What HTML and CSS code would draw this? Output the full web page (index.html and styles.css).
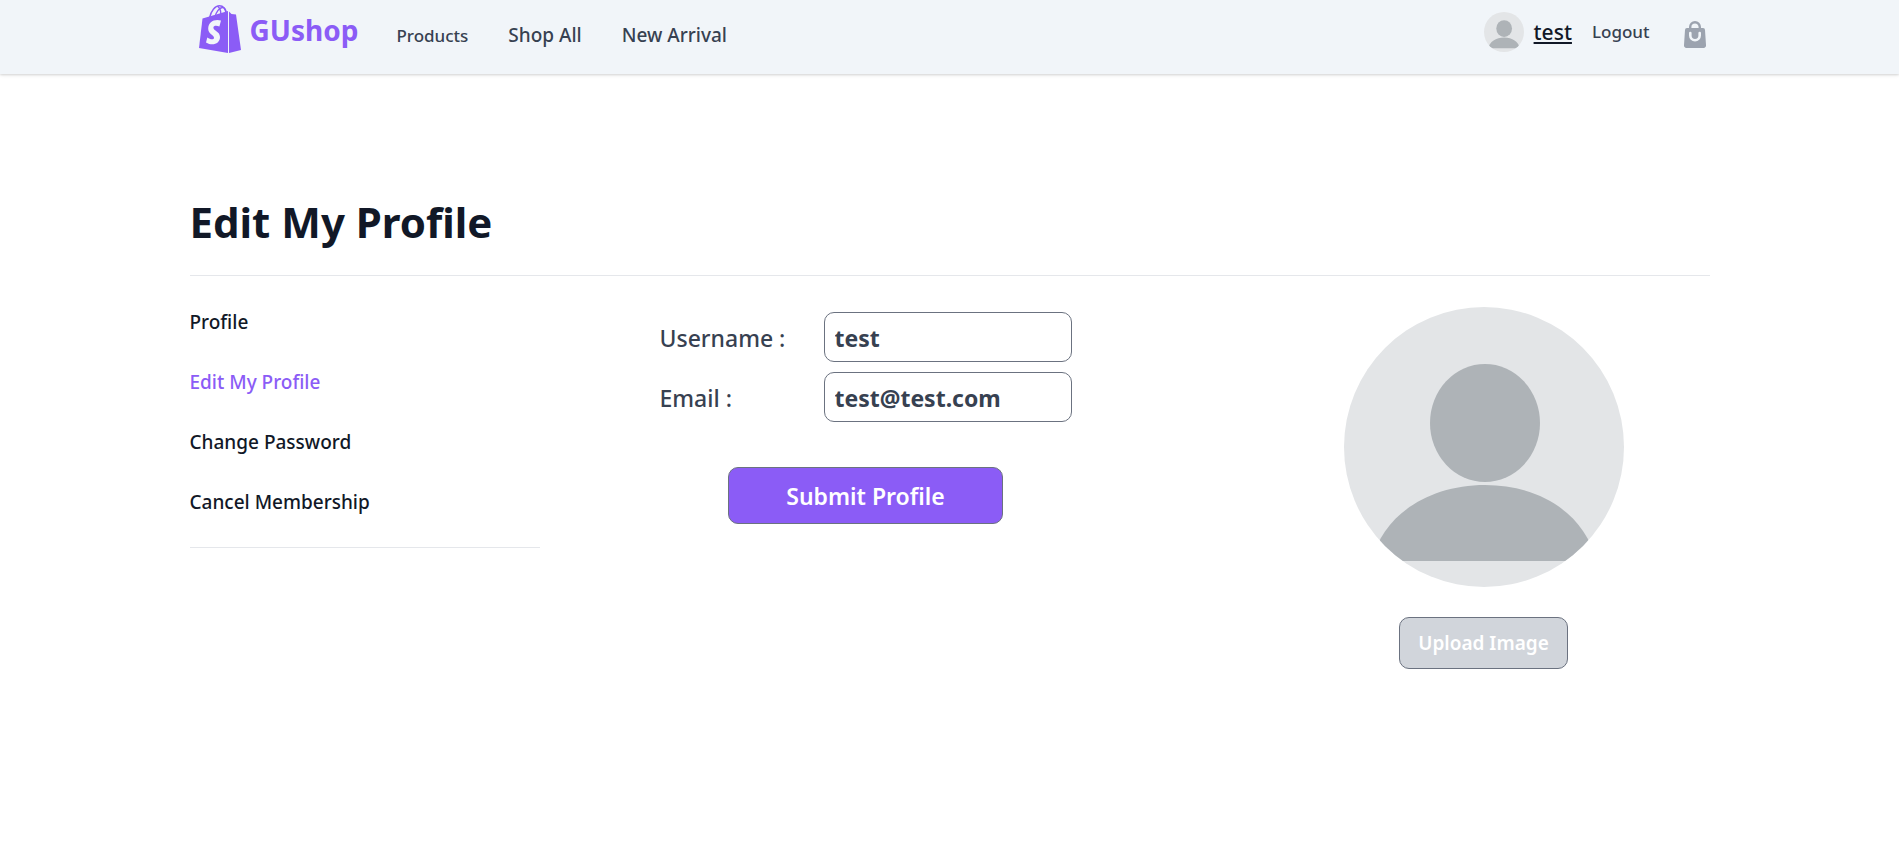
FILE: index.html
```html
<!DOCTYPE html>
<html lang="en">
<head>
<meta charset="utf-8">
<meta name="viewport" content="width=device-width, initial-scale=1">
<title>GUshop - Edit My Profile</title>
<link rel="stylesheet" href="styles.css">
</head>
<body>
<svg class="defs" aria-hidden="true">
  <symbol id="person" viewBox="0 0 280 280">
    <rect width="280" height="280" fill="#e3e5e7"/>
    <ellipse cx="141" cy="116" rx="55" ry="59" fill="#aeb3b7"/>
    <path d="M28 254C38 209 84 178 141 178s101 31 111 76z" fill="#aeb3b7"/>
  </symbol>
</svg>
<header class="site-header">
  <div class="container bar">
    <a class="brand" href="#">
      <svg class="brand-icon" viewBox="0 0 42 48" aria-hidden="true">
        <g fill="none" stroke="#8b5cf6" stroke-width="1.4">
          <path d="M10.500 13C12 6 16 .8 20.500 .8c4 0 6 3.200 6.500 8"/>
          <path d="M16 12C17 7 20.500 2.500 23.500 2.500c2 0 3.500 2 4 6"/>
          <path d="M21.800 10c.2-4-.5-6.500-2.800-8.500"/>
        </g>
        <path fill="#8b5cf6" d="M3.500 13.500 29 6v42L0 43z"/>
        <path fill="#8b5cf6" d="M30 6.500l2.500 2.500 4.500 .5L42 45l-12 3z"/>
        <path fill="#f1f5f9" d="M22 15.500l-1.600 6c-3-1.300-6-.9-6 1.200 0 3 6.600 3.600 6.600 9.300 0 6.800-7.500 9.500-14 5.500l1.300-5c3 2.300 6.700 2.500 6.700 .2 0-2.900-5.800-3.400-5.800-9C9.200 17 15.500 13.500 22 15.500z"/>
      </svg>
      <span>GUshop</span>
    </a>
    <nav class="main-nav" aria-label="Main">
      <a class="nav-small" href="#">Products</a>
      <a href="#">Shop All</a>
      <a href="#">New Arrival</a>
    </nav>
    <div class="account">
      <svg class="avatar-small" role="img" aria-label="Avatar"><use href="#person"/></svg>
      <a class="user" href="#">test</a>
      <a class="logout" href="#">Logout</a>
      <a class="bag" href="#" aria-label="Shopping bag">
        <svg viewBox="0 0 22 27" aria-hidden="true">
          <path fill="none" stroke="#9ca3af" stroke-width="2.400" d="M6.200 9V6a4.800 4.800 0 0 1 9.600 0v3"/>
          <path fill="#9ca3af" d="M3 7h16a2 2 0 0 1 2 2l1 15a2.500 2.500 0 0 1-2.500 3h-17A2.500 2.500 0 0 1 0 24L1 9a2 2 0 0 1 2-2z"/>
          <path fill="none" stroke="#f1f5f9" stroke-width="2.600" stroke-linecap="round" d="M6.300 12v2.500a4.700 4.700 0 0 0 9.400 0V12"/>
        </svg>
      </a>
    </div>
  </div>
</header>
<main class="container page">
  <h1>Edit My Profile</h1>
  <div class="columns">
    <nav class="side-nav" aria-label="Account">
      <a href="#">Profile</a>
      <a class="current" href="#" aria-current="page">Edit My Profile</a>
      <a href="#">Change Password</a>
      <a href="#">Cancel Membership</a>
    </nav>
    <form class="profile-form">
      <div class="fields">
        <label for="username">Username :</label>
        <input id="username" type="text" value="test">
        <label for="email">Email :</label>
        <input id="email" type="email" value="test@test.com">
      </div>
      <button class="submit" type="button">Submit Profile</button>
    </form>
    <section class="picture" aria-label="Profile image">
      <svg class="avatar-large" role="img" aria-label="Profile picture"><use href="#person"/></svg>
      <button class="upload" type="button">Upload Image</button>
    </section>
  </div>
</main>
</body>
</html>
```
FILE: styles.css
```css
*, *::before, *::after { box-sizing: border-box; }
body {
  margin: 0;
  background: #fff;
  color: #111827;
  font: 500 19px/30px "Segoe UI", "Noto Sans", "Open Sans", sans-serif;
}
a { color: inherit; text-decoration: none; }
h1 { margin: 0; }
svg { display: block; }
input, button { font: inherit; }
.defs { position: absolute; width: 0; height: 0; }
.container { max-width: 1600px; margin: 0 auto; padding: 0 40px; }

.site-header {
  background: #f1f5f9;
  box-shadow: 0 1px 4px rgba(0, 0, 0, .1), 0 1px 2px rgba(0, 0, 0, .1);
}
.bar { display: flex; height: 74px; }
.brand {
  display: flex;
  gap: 9px;
  margin: 5px 0 0 9px;
  color: #8b5cf6;
  font-size: 28px;
  font-weight: 700;
  line-height: 50px;
}
.brand-icon { width: 42px; height: 48px; }
.main-nav {
  display: flex;
  align-items: baseline;
  gap: 40px;
  margin: 20px 0 0 38px;
  color: #374151;
}
.nav-small, .logout { font-size: 17px; }
.account {
  display: flex;
  align-items: center;
  height: 40px;
  margin: 12px 4px 0 auto;
}
.avatar-small { width: 40px; height: 40px; border-radius: 50%; }
.user { margin-left: 10px; font-size: 21px; text-decoration: underline; }
.logout { margin-left: 20px; color: #374151; }
.bag { margin: 5px 0 0 34px; }
.bag svg { width: 22px; height: 27px; }

.page { padding-top: 120px; }
.page h1 {
  padding-bottom: 25px;
  border-bottom: 1px solid #e5e7eb;
  font-size: 42px;
  line-height: 56px;
}
.columns {
  display: grid;
  grid-template-columns: repeat(4, minmax(0, 1fr));
  column-gap: 40px;
  align-items: start;
  padding-top: 31px;
}
.side-nav {
  display: flex;
  flex-direction: column;
  gap: 30px;
  padding: 0 0 30px;
  border-bottom: 1px solid #e5e7eb;
}
.side-nav .current { color: #8b5cf6; }
.profile-form {
  grid-column: span 2;
  justify-self: start;
  width: 412px;
  margin: 5px 0 0 80px;
  color: #374151;
  font-size: 23px;
}
.fields {
  display: grid;
  grid-template-columns: 1fr 248px;
  gap: 10px 0;
  align-items: center;
}
.fields label { padding-top: 2px; }
.fields input {
  width: 100%;
  height: 50px;
  padding: 2px 10px 0;
  border: 1px solid #6b7280;
  border-radius: 10px;
  background: #fff;
  color: #374151;
  font-weight: 700;
}
.submit, .upload {
  display: block;
  padding: 0;
  border: 1px solid #6b7280;
  border-radius: 10px;
  color: #fff;
  font-weight: 600;
}
.submit { width: 275px; height: 57px; margin: 45px auto 0; background: #8b5cf6; }
.picture { display: flex; flex-direction: column; align-items: center; margin-right: 86px; justify-self: end; }
.avatar-large { width: 280px; height: 280px; border-radius: 50%; }
.upload { width: 169px; height: 52px; margin-top: 30px; background: #d1d5db; }
```
